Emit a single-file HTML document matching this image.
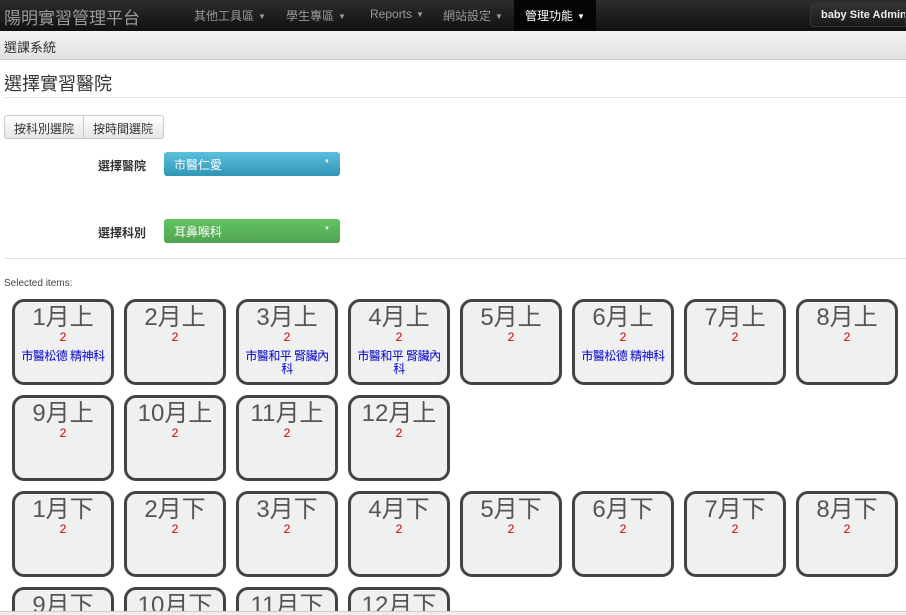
<!DOCTYPE html>
<html><head><meta charset="utf-8"><style>
*{box-sizing:border-box;margin:0;padding:0}
html,body{width:906px;height:615px;overflow:hidden}
body{background:#fff;font-family:"Liberation Sans","Noto Sans CJK TC",sans-serif;position:relative;color:#333}
.nav{position:absolute;left:0;top:0;width:906px;height:31px;background:linear-gradient(#2c2c2c,#111);}
.brand{position:absolute;left:4px;top:4px;font-size:17px;color:#999}
.ni{position:absolute;top:7px;font-size:12px;color:#999;white-space:nowrap}
.act{position:absolute;left:514px;top:0;width:82px;height:31px;background:#050505}
.car{font-size:8px;margin-left:4px;vertical-align:middle}
.adm{position:absolute;left:810px;top:3px;width:96px;height:24px;border:1px solid #333;border-radius:3px 0 0 3px;background:linear-gradient(#333,#1a1a1a);color:#eee;font-size:11px;font-weight:bold;padding:5px 0 0 10px;white-space:nowrap;overflow:hidden}
.sub{position:absolute;left:0;top:31px;width:906px;height:29px;background:linear-gradient(#f2f2f2,#e2e2e2);border-bottom:1px solid #ccc;font-size:13px;padding:6px 4px}
h3{position:absolute;left:4px;top:70px;font-size:18px;font-weight:normal;color:#333}
.hr{position:absolute;left:4px;width:902px;height:1px;background:#e2e2e2}
.bg{position:absolute;top:115px;height:24px;border:1px solid #ccc;background:linear-gradient(#fff,#e6e6e6);font-size:12px;padding:4px 9px;color:#333}
.lab{position:absolute;left:98px;font-size:12px;font-weight:bold;color:#333}
.dd{position:absolute;left:164px;width:176px;height:24px;border-radius:3px;color:#fff;font-size:12px;padding:4px 10px}
.dd:after{content:"▼";position:absolute;right:10px;top:7px;font-size:6px}
.sel{position:absolute;left:4px;top:278px;font-size:10px;color:#444}
.b{position:absolute;width:102px;height:86px;border:3px solid #444;border-radius:12px;background:#f0f0f0;text-align:center;overflow:hidden}
.b.c{height:24px;border-bottom:none;border-radius:12px 12px 0 0}
.b .t{font-size:24px;line-height:26px;margin-top:3px;color:#555}
.b .n{font-size:12px;color:#c00;line-height:13px}
.b .h{font-size:12px;color:#00c;line-height:13px;margin-top:6px;letter-spacing:-0.5px}
.foot{position:absolute;left:0;top:611px;width:906px;height:4px;background:#eee;border-top:1px solid #ccc;z-index:5}
</style></head><body>
<div class="nav">
<div class="brand">陽明實習管理平台</div>
<div class="ni" style="left:194px">其他工具區<span class="car">▼</span></div>
<div class="ni" style="left:286px">學生專區<span class="car">▼</span></div>
<div class="ni" style="left:370px">Reports<span class="car">▼</span></div>
<div class="ni" style="left:443px">網站設定<span class="car">▼</span></div>
<div class="act"></div>
<div class="ni" style="left:525px;color:#fff">管理功能<span class="car">▼</span></div>
<div class="adm">baby Site Admin</div>
</div>
<div class="sub">選課系統</div>
<h3>選擇實習醫院</h3>
<div class="hr" style="top:97px"></div>
<div class="bg" style="left:4px;width:80px;border-radius:3px 0 0 3px">按科別選院</div>
<div class="bg" style="left:83px;width:81px;border-radius:0 3px 3px 0">按時間選院</div>
<div class="lab" style="top:157px">選擇醫院</div>
<div class="dd" style="top:152px;background:linear-gradient(#5bc0de,#2f96b4)">市醫仁愛</div>
<div class="lab" style="top:224px">選擇科別</div>
<div class="dd" style="top:219px;background:linear-gradient(#62c462,#51a351)">耳鼻喉科</div>
<div class="hr" style="top:258px"></div>
<div class="sel">Selected items:</div>

<div class="b" style="left:12px;top:299px"><div class="t">1月上</div><div class="n">2</div><div class="h">市醫松德 精神科</div></div>
<div class="b" style="left:124px;top:299px"><div class="t">2月上</div><div class="n">2</div></div>
<div class="b" style="left:236px;top:299px"><div class="t">3月上</div><div class="n">2</div><div class="h">市醫和平 腎臟內<br>科</div></div>
<div class="b" style="left:348px;top:299px"><div class="t">4月上</div><div class="n">2</div><div class="h">市醫和平 腎臟內<br>科</div></div>
<div class="b" style="left:460px;top:299px"><div class="t">5月上</div><div class="n">2</div></div>
<div class="b" style="left:572px;top:299px"><div class="t">6月上</div><div class="n">2</div><div class="h">市醫松德 精神科</div></div>
<div class="b" style="left:684px;top:299px"><div class="t">7月上</div><div class="n">2</div></div>
<div class="b" style="left:796px;top:299px"><div class="t">8月上</div><div class="n">2</div></div>

<div class="b" style="left:12px;top:395px"><div class="t">9月上</div><div class="n">2</div></div>
<div class="b" style="left:124px;top:395px"><div class="t">10月上</div><div class="n">2</div></div>
<div class="b" style="left:236px;top:395px"><div class="t">11月上</div><div class="n">2</div></div>
<div class="b" style="left:348px;top:395px"><div class="t">12月上</div><div class="n">2</div></div>

<div class="b" style="left:12px;top:491px"><div class="t">1月下</div><div class="n">2</div></div>
<div class="b" style="left:124px;top:491px"><div class="t">2月下</div><div class="n">2</div></div>
<div class="b" style="left:236px;top:491px"><div class="t">3月下</div><div class="n">2</div></div>
<div class="b" style="left:348px;top:491px"><div class="t">4月下</div><div class="n">2</div></div>
<div class="b" style="left:460px;top:491px"><div class="t">5月下</div><div class="n">2</div></div>
<div class="b" style="left:572px;top:491px"><div class="t">6月下</div><div class="n">2</div></div>
<div class="b" style="left:684px;top:491px"><div class="t">7月下</div><div class="n">2</div></div>
<div class="b" style="left:796px;top:491px"><div class="t">8月下</div><div class="n">2</div></div>

<div class="b c" style="left:12px;top:587px"><div class="t">9月下</div></div>
<div class="b c" style="left:124px;top:587px"><div class="t">10月下</div></div>
<div class="b c" style="left:236px;top:587px"><div class="t">11月下</div></div>
<div class="b c" style="left:348px;top:587px"><div class="t">12月下</div></div>
<div class="foot"></div>
</body></html>
